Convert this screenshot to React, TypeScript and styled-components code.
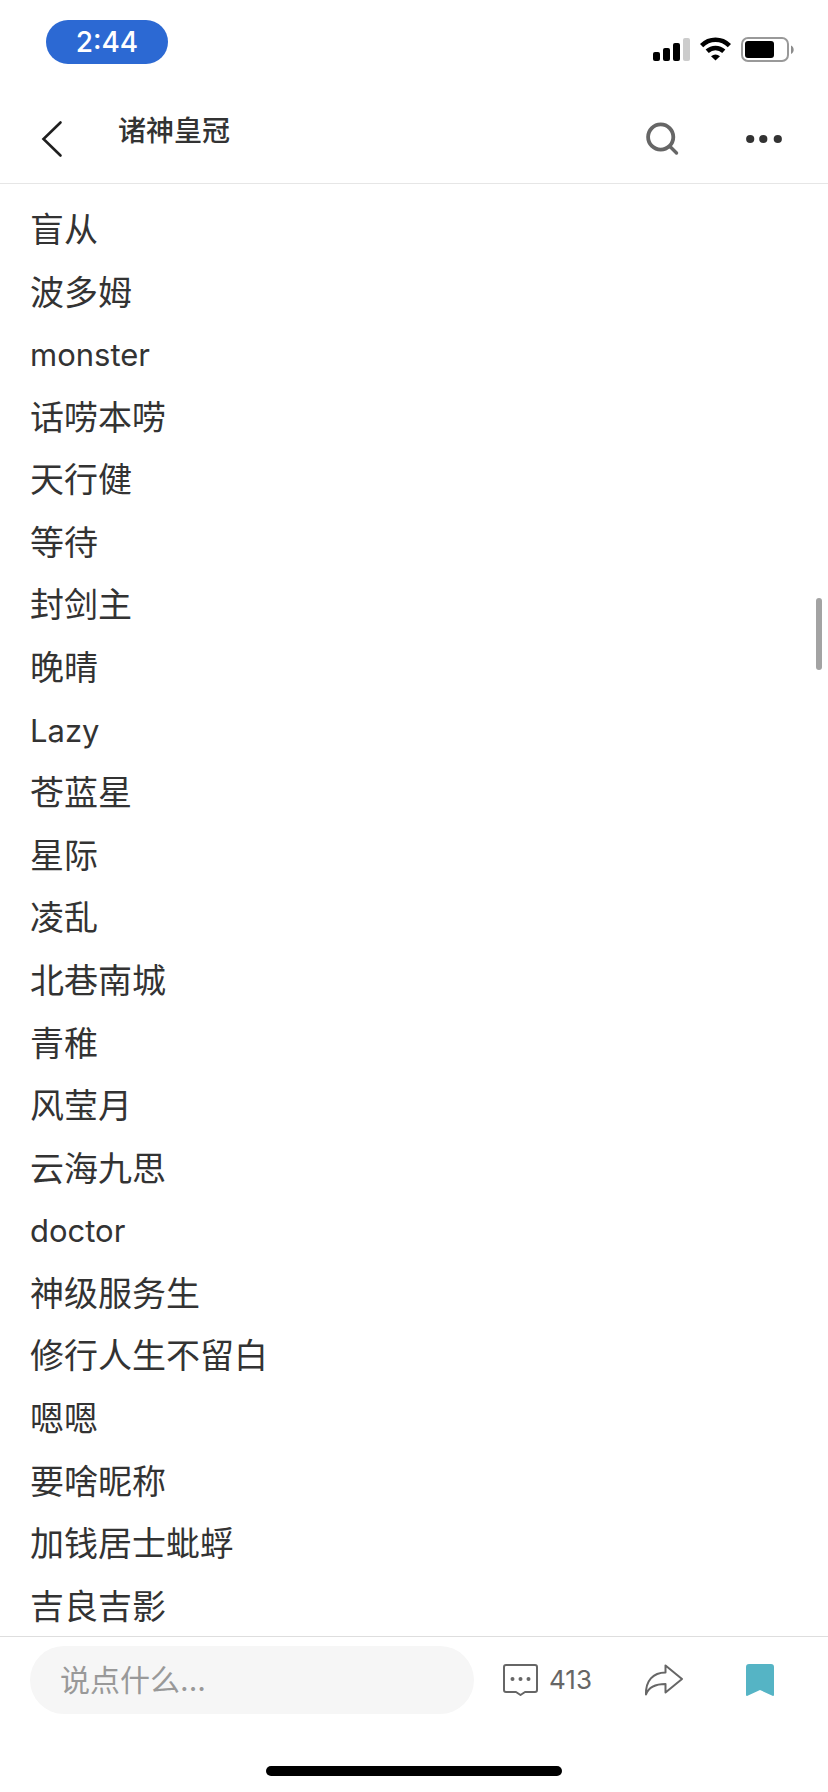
import React from "react";
import styled, { createGlobalStyle } from "styled-components";

const GlobalStyle = createGlobalStyle`
  * { box-sizing: border-box; }
  body {
    margin: 0;
    background: #fff;
    color: #333;
    font-family: Inter, "Noto Sans CJK SC", sans-serif;
  }
  button { border: 0; padding: 0; background: none; font: inherit; color: inherit; cursor: pointer; }
  svg { display: block; }
`;

const Page = styled.div`
  position: relative;
  display: flex;
  flex-direction: column;
  min-height: 100vh;
`;

const StatusBar = styled.div`
  display: flex;
  justify-content: space-between;
  height: 94px;
  padding: 20px 34px 0 46px;
`;

const Clock = styled.time`
  width: 122px;
  height: 44px;
  border-radius: 22px;
  background: #2c69d3;
  color: #fff;
  font-size: 28px;
  font-weight: 500;
  line-height: 44px;
  text-align: center;
`;

const StatusIcons = styled.div`
  display: flex;
  align-items: flex-start;
  gap: 10px;
  padding-top: 17px;
`;

const NavBar = styled.header`
  display: flex;
  align-items: center;
  height: 90px;
  padding: 0 46px 0 40px;
  border-bottom: 1px solid #e6e6e6;
`;

const Title = styled.h1`
  flex: 1;
  margin: 0;
  padding: 0 0 16px 54px;
  font-size: 28px;
  font-weight: 500;
  line-height: 40px;
`;

const NavActions = styled.div`
  display: flex;
  align-items: center;
  gap: 66px;
`;

const NameList = styled.ul`
  flex: 1;
  display: flex;
  flex-direction: column;
  justify-content: space-between;
  margin: 0;
  padding: 17px 30px 0;
  list-style: none;
`;

const NameRow = styled.li<{ $latin: boolean }>`
  height: 58px;
  font-size: ${(p) => (p.$latin ? 31 : 34)}px;
  line-height: 58px;
`;

const ScrollThumb = styled.div`
  position: absolute;
  top: 598px;
  right: 6px;
  width: 6px;
  height: 72px;
  border-radius: 3px;
  background: #a3a3a3;
`;

const Footer = styled.footer`
  border-top: 1px solid #dedede;
  padding: 9px 0 16px;
`;

const ActionBar = styled.div`
  display: flex;
  align-items: center;
  padding: 0 54px 0 30px;
`;

const CommentInput = styled.input`
  flex: 1;
  min-width: 0;
  height: 68px;
  padding: 0 30px;
  border: 0;
  border-radius: 34px;
  background: #f6f6f6;
  color: #333;
  font-family: inherit;
  font-size: 30px;
  outline: none;
  &::placeholder { color: #999; opacity: 1; }
`;

const Actions = styled.div`
  display: flex;
  align-items: center;
  gap: 52px;
  margin-left: 29px;
`;

const CommentButton = styled.button`
  display: flex;
  align-items: center;
  gap: 11px;
  && { color: #666; font-size: 26px; line-height: 32px; }
`;

const ShareButton = styled.button`
  margin-right: 10px;
`;

const HomeIndicator = styled.div`
  width: 296px;
  height: 10px;
  margin: 52px auto 0;
  border-radius: 5px;
  background: #000;
`;

const names = [
  "盲从", "波多姆", "monster", "话唠本唠", "天行健", "等待", "封剑主", "晚晴",
  "Lazy", "苍蓝星", "星际", "凌乱", "北巷南城", "青稚", "风莹月", "云海九思",
  "doctor", "神级服务生", "修行人生不留白", "嗯嗯", "要啥昵称", "加钱居士蚍蜉", "吉良吉影",
];

const SignalIcon = () => (
  <svg width="37" height="24" viewBox="0 0 37 24" aria-hidden="true">
    <rect x="0" y="15" width="7" height="9" rx="2" />
    <rect x="10" y="11" width="7" height="13" rx="2" />
    <rect x="20" y="6" width="7" height="18" rx="2" />
    <rect x="30" y="1" width="7" height="23" rx="2" fill="#ccc" />
  </svg>
);

const WifiIcon = () => (
  <svg width="31" height="24" viewBox="0 0 31 24" aria-hidden="true">
    <g fill="none" stroke="#000" strokeWidth="4.6">
      <path d="M1.6 8.6C9.5 .8 21.5 .8 29.4 8.6" />
      <path d="M7.2 14.3C12 9.8 19 9.8 23.8 14.3" />
    </g>
    <path d="M11 19.2Q15.5 15.8 20 19.2L15.5 23.6Z" />
  </svg>
);

const BatteryIcon = () => (
  <svg width="53" height="26" viewBox="0 0 53 26" aria-hidden="true">
    <rect x="1" y="1" width="46" height="23" rx="6" fill="none" stroke="#999" strokeWidth="2" />
    <rect x="4" y="4" width="29" height="17" rx="3" />
    <path d="M50 8.5C53.6 10 53.6 15.5 50 17Z" fill="#8c8c8c" />
  </svg>
);

const BackIcon = () => (
  <svg width="24" height="38" viewBox="0 0 24 38" fill="none" stroke="#1f1f1f" strokeWidth="2.6" strokeLinecap="round">
    <path d="M20.5 2.5L3.5 19L20.5 35.5" />
  </svg>
);

const SearchIcon = () => (
  <svg width="34" height="34" viewBox="0 0 34 34" fill="none" stroke="#666" strokeLinecap="round">
    <circle cx="14.7" cy="15" r="12.6" strokeWidth="3.8" />
    <path d="M24.5 25L30.5 31" strokeWidth="3.4" />
  </svg>
);

const MoreIcon = () => (
  <svg width="36" height="10" viewBox="0 0 36 10" fill="#333">
    <circle cx="4.2" cy="5" r="4.1" />
    <circle cx="17.3" cy="5" r="4.1" />
    <circle cx="31.8" cy="5" r="4.1" />
  </svg>
);

const CommentIcon = () => (
  <svg width="35" height="32" viewBox="0 0 35 32" fill="none" stroke="#666" strokeWidth="2" strokeLinejoin="round">
    <path d="M3 1H32Q34 1 34 3V26Q34 28 32 28H22L17.5 31L13 28H3Q1 28 1 26V3Q1 1 3 1Z" />
    <g fill="#666" stroke="none">
      <circle cx="9.5" cy="15" r="2" />
      <circle cx="17.5" cy="15" r="2" />
      <circle cx="25.5" cy="15" r="2" />
    </g>
  </svg>
);

const ShareIcon = () => (
  <svg width="40" height="32" viewBox="0 0 40 32" fill="none" stroke="#666" strokeWidth="2" strokeLinejoin="round">
    <path d="M21.5 1.5V8.5C9 8.5 1.5 17 2 30.5C4.5 23.5 10 20 21.5 20V28.5L38 15Z" />
  </svg>
);

const BookmarkIcon = () => (
  <svg width="28" height="32" viewBox="0 0 28 32" fill="#55b4c5">
    <path d="M3 0H25Q28 0 28 3V31Q28 32 27 32L14 26L1 32Q0 32 0 31V3Q0 0 3 0Z" />
  </svg>
);

export default function App() {
  return (
    <>
      <GlobalStyle />
      <Page>
        <StatusBar>
          <Clock>2:44</Clock>
          <StatusIcons>
            <SignalIcon />
            <WifiIcon />
            <BatteryIcon />
          </StatusIcons>
        </StatusBar>
        <NavBar>
          <button aria-label="返回"><BackIcon /></button>
          <Title>诸神皇冠</Title>
          <NavActions>
            <button aria-label="搜索"><SearchIcon /></button>
            <button aria-label="更多"><MoreIcon /></button>
          </NavActions>
        </NavBar>
        <NameList>
          {names.map((name) => (
            <NameRow key={name} $latin={/^[a-z]+$/i.test(name)}>{name}</NameRow>
          ))}
        </NameList>
        <Footer>
          <ActionBar>
            <CommentInput aria-label="评论" placeholder="说点什么..." />
            <Actions>
              <CommentButton><CommentIcon />413</CommentButton>
              <ShareButton aria-label="分享"><ShareIcon /></ShareButton>
              <button aria-label="收藏"><BookmarkIcon /></button>
            </Actions>
          </ActionBar>
          <HomeIndicator />
        </Footer>
        <ScrollThumb />
      </Page>
    </>
  );
}
